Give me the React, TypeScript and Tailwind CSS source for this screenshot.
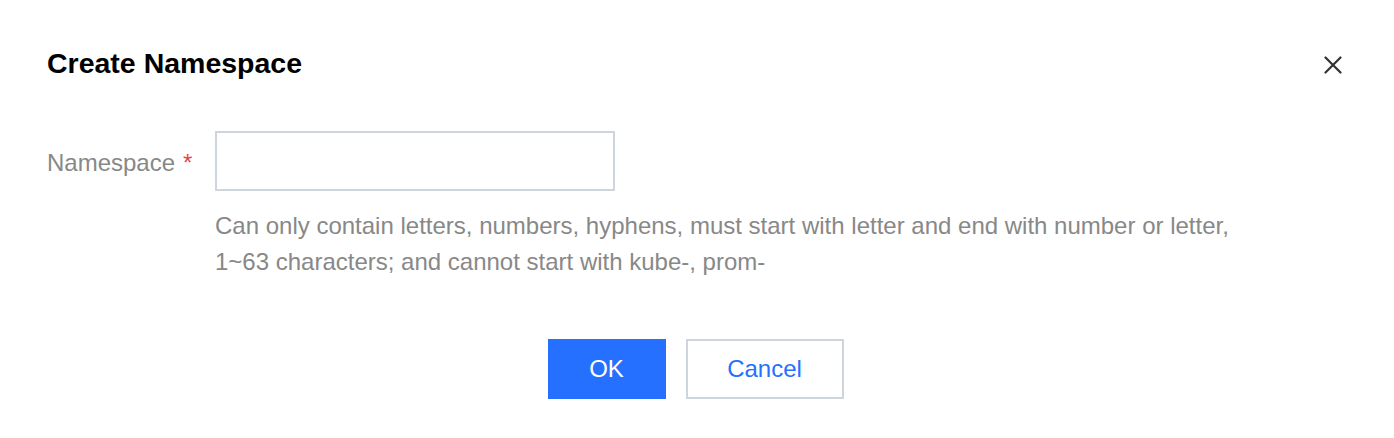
const CloseIcon = () => (
  <svg width="18" height="18" viewBox="0 0 18 18" fill="none">
    <path d="M1.5 1.5L16.5 16.5M16.5 1.5L1.5 16.5" stroke="#333" strokeWidth="2.2" strokeLinecap="round" />
  </svg>
);

const App = () => {
  return (
    <div className="w-[1394px] h-[438px] bg-white font-['Liberation_Sans',Arial,sans-serif] pt-[43px] pl-[47px] pr-[51px]">
      {/* Header */}
      <div className="flex items-center justify-between h-[40px]">
        <h2 className="text-[28.5px] leading-[40px] font-bold text-black">Create Namespace</h2>
        <button className="flex items-center justify-center w-[20px] h-[20px] mt-[3px]">
          <CloseIcon />
        </button>
      </div>

      {/* Form row */}
      <div className="flex items-start mt-[48px]">
        <label className="w-[168px] shrink-0 mt-[14px] text-[24px] leading-[36px] text-[#888]">
          Namespace<span className="ml-[8px] text-[#e54545]">*</span>
        </label>
        <div className="flex flex-col">
          <input
            type="text"
            className="w-[400px] h-[60px] border-2 border-[#cfd5de] bg-white outline-none px-[18px] text-[24px]"
          />
          <p className="mt-[17px] text-[24px] leading-[36px] text-[#888]">
            Can only contain letters, numbers, hyphens, must start with letter and end with number or letter,
            <br />
            1~63 characters; and cannot start with kube-, prom-
          </p>
        </div>
      </div>

      {/* Footer */}
      <div className="flex justify-center gap-[20px] mt-[59px] ml-[1px]">
        <button className="w-[118px] h-[60px] bg-[#2670ff] text-white text-[24px]">OK</button>
        <button className="w-[158px] h-[60px] border-2 border-[#cfd5de] bg-white text-[#2670ff] text-[24px]">
          Cancel
        </button>
      </div>
    </div>
  );
};

export default App;
